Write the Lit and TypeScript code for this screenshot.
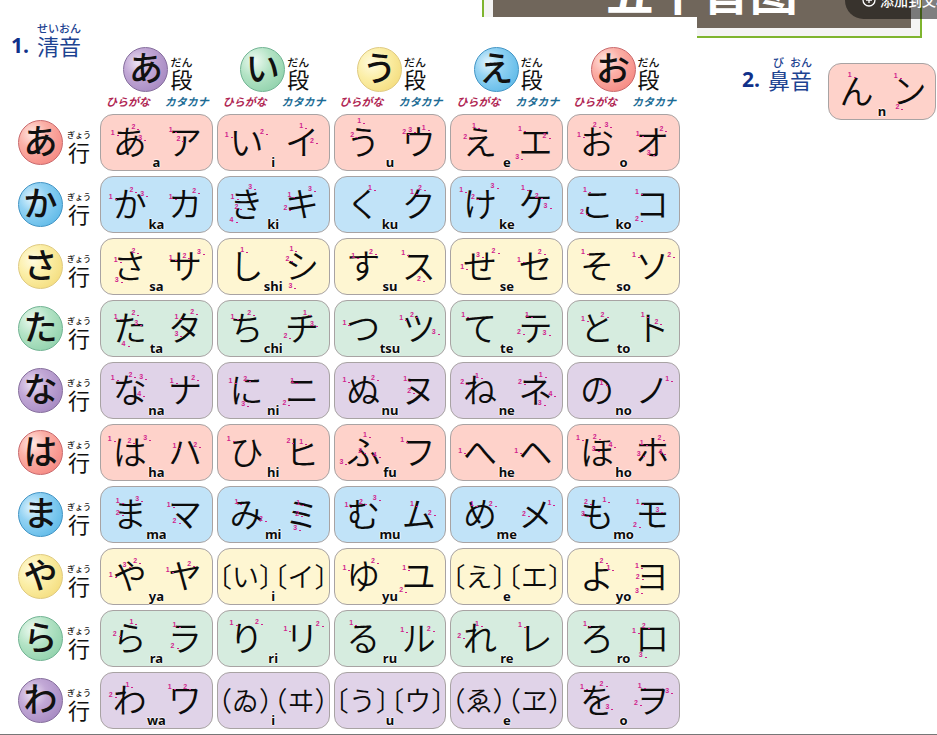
import { LitElement, html, css, nothing } from "lit";
import { customElement, property } from "lit/decorators.js";

type Tone = "red" | "blue" | "yellow" | "green" | "purple";

/** hiragana, katakana, romaji, stroke marks as "order,x,y" on a 113 x 57 card */
type Kana = [string, string, string, string];

interface Row {
  lead: string;
  tone: Tone;
  cells: Kana[];
}

const COLUMNS: { kana: string; tone: Tone }[] = [
  { kana: "あ", tone: "purple" },
  { kana: "い", tone: "green" },
  { kana: "う", tone: "yellow" },
  { kana: "え", tone: "blue" },
  { kana: "お", tone: "red" },
];

const ROWS: Row[] = [
  {
    lead: "あ", tone: "red", cells: [
      ["あ", "ア", "a", "1,12,18 2,33,12 3,40,23 1,71,15 2,79,24"],
      ["い", "イ", "i", "1,9,20 2,45,17 1,85,11 2,96,26"],
      ["う", "ウ", "u", "1,25,6 2,18,20 2,71,17 3,77,15 1,91,13"],
      ["え", "エ", "e", "1,23,11 2,14,22 1,70,14 2,95,21 3,67,42"],
      ["お", "オ", "o", "2,27,10 3,39,10 1,11,20 1,71,19 2,95,14 3,82,38"],
    ],
  },
  {
    lead: "か", tone: "blue", cells: [
      ["か", "カ", "ka", "1,10,20 2,31,13 3,42,17 1,71,20 2,95,14"],
      ["き", "キ", "ki", "1,15,20 3,33,10 2,19,30 4,14,43 1,73,18 3,94,12 2,69,31"],
      ["く", "ク", "ku", "1,36,11 1,79,15 2,87,11"],
      ["け", "ケ", "ke", "1,10,13 2,22,20 3,42,9 1,73,11 2,87,19 3,96,29"],
      ["こ", "コ", "ko", "1,17,13 2,14,35 1,70,15 2,70,42"],
    ],
  },
  {
    lead: "さ", tone: "yellow", cells: [
      ["さ", "サ", "sa", "1,15,21 2,33,12 3,16,41 1,71,19 2,85,17 3,100,13"],
      ["し", "シ", "shi", "1,25,11 1,75,10 2,71,20 3,74,47"],
      ["す", "ス", "su", "1,19,17 2,37,13 1,70,14 2,86,40"],
      ["せ", "セ", "se", "1,11,28 3,27,16 2,43,12 1,69,21 2,90,13"],
      ["そ", "ソ", "so", "1,15,13 1,67,16 2,103,16"],
    ],
  },
  {
    lead: "た", tone: "green", cells: [
      ["た", "タ", "ta", "1,15,16 2,33,12 3,36,22 4,23,43 1,77,16 2,93,11 3,77,33"],
      ["ち", "チ", "chi", "1,15,16 2,32,12 1,89,12 3,96,23 2,69,35"],
      ["つ", "ツ", "tsu", "1,10,22 1,68,17 2,79,14 3,101,31"],
      ["て", "テ", "te", "1,12,14 1,77,14 2,69,31 3,95,32"],
      ["と", "ト", "to", "1,15,18 2,35,14 1,76,14 2,90,21"],
    ],
  },
  {
    lead: "な", tone: "purple", cells: [
      ["な", "ナ", "na", "1,12,15 2,30,12 3,41,14 4,39,31 1,72,18 2,94,15"],
      ["に", "ニ", "ni", "1,13,18 2,28,16 3,26,41 1,76,18 2,68,40"],
      ["ぬ", "ヌ", "nu", "1,10,17 2,39,15 1,72,16 2,76,28"],
      ["ね", "ネ", "ne", "2,11,19 1,26,13 1,91,12 2,70,19 4,101,31 3,90,40"],
      ["の", "ノ", "no", "1,34,20 1,101,16"],
    ],
  },
  {
    lead: "は", tone: "red", cells: [
      ["は", "ハ", "ha", "1,9,14 2,29,16 3,45,13 1,75,21 2,96,20"],
      ["ひ", "ヒ", "hi", "1,11,14 2,72,16 1,85,17"],
      ["ふ", "フ", "fu", "1,31,10 2,26,26 3,7,37 4,41,30 1,69,15"],
      ["へ", "ヘ", "he", "1,9,26 1,66,26"],
      ["ほ", "ホ", "ho", "1,10,13 2,27,12 3,26,24 4,43,20 1,75,18 2,93,13 3,72,29 4,94,27"],
    ],
  },
  {
    lead: "ま", tone: "blue", cells: [
      ["ま", "マ", "ma", "1,17,14 3,37,12 2,17,26 1,69,18 2,75,34"],
      ["み", "ミ", "mi", "1,19,15 2,44,32 1,82,16 2,81,27 3,79,41"],
      ["む", "ム", "mu", "1,12,18 2,27,15 3,41,11 1,79,17 2,97,26"],
      ["め", "メ", "me", "1,21,17 2,40,17 1,100,16 2,74,27"],
      ["も", "モ", "mo", "2,18,15 1,37,13 3,15,27 1,71,15 3,91,23 2,68,38"],
    ],
  },
  {
    lead: "や", tone: "yellow", cells: [
      ["や", "ヤ", "ya", "1,10,26 3,24,16 2,35,12 1,68,21 2,90,15"],
      ["〔い〕", "〔イ〕", "i", ""],
      ["ゆ", "ユ", "yu", "1,10,19 2,39,12 1,71,19 2,68,41"],
      ["〔え〕", "〔エ〕", "e", ""],
      ["よ", "ヨ", "yo", "2,34,12 1,41,19 1,70,17 2,71,28 3,70,42"],
    ],
  },
  {
    lead: "ら", tone: "green", cells: [
      ["ら", "ラ", "ra", "1,31,11 2,14,23 1,75,14 2,73,35"],
      ["り", "リ", "ri", "1,14,12 2,40,11 1,69,18 2,102,13"],
      ["る", "ル", "ru", "1,17,12 1,69,19 2,96,18"],
      ["れ", "レ", "re", "2,8,25 1,26,13 1,70,14"],
      ["ろ", "ロ", "ro", "1,17,13 1,67,20 2,77,15 3,74,44"],
    ],
  },
  {
    lead: "わ", tone: "purple", cells: [
      ["わ", "ワ", "wa", "2,10,22 1,27,12 1,70,14 2,86,14"],
      ["（ゐ）", "（ヰ）", "i", ""],
      ["〔う〕", "〔ウ〕", "u", ""],
      ["（ゑ）", "（ヱ）", "e", ""],
      ["を", "ヲ", "o", "1,14,14 2,34,11 3,40,34 1,73,13 3,101,18 2,69,30"],
    ],
  },
];

@customElement("kana-card")
export class KanaCard extends LitElement {
  @property({ attribute: false }) kana: Kana = ["", "", "", ""];
  @property() tone: Tone = "red";

  static styles = css`
    :host {
      display: block;
    }
    .card {
      position: relative;
      box-sizing: border-box;
      display: grid;
      grid-template-columns: 1fr 1fr;
      height: 57px;
      border: 1px solid #a8a3a3;
      border-radius: 13px;
      color: #0c0c0c;
      font-family: "Noto Sans CJK JP", sans-serif;
    }
    .red { background: #fed2ca; }
    .blue { background: #c1e3f8; }
    .yellow { background: #fef6d2; }
    .green { background: #d6ecdf; }
    .purple { background: #e0d3e8; }
    .glyph {
      display: flex;
      align-items: center;
      justify-content: center;
      min-width: 0;
      height: 51px;
      padding-left: 2px;
      font-size: 34px;
      font-weight: 350;
      line-height: 51px;
      white-space: nowrap;
    }
    .archaic {
      height: 53px;
      padding-left: 0;
      font-size: 27px;
    }
    .romaji {
      position: absolute;
      left: 0;
      right: 0;
      bottom: 0;
      text-align: center;
      font: bold 13px/16px "Noto Sans", sans-serif;
      text-shadow: 1px 0 #fff9, -1px 0 #fff9, 0 1px #fff9, 0 -1px #fff9;
    }
    .mark {
      position: absolute;
      width: 6px;
      margin: -4px 0 0 -3px;
      text-align: center;
      color: #d0238c;
      font: bold 7px/8px "Liberation Sans", sans-serif;
    }
    .mark::after {
      content: "";
      position: absolute;
      left: 7px;
      top: 6px;
      width: 2px;
      height: 1px;
      background: #d0238c;
    }
  `;

  render() {
    const [hira, kata, romaji, marks] = this.kana;
    const glyph = hira.length > 1 ? "glyph archaic" : "glyph";
    return html`<div class="card ${this.tone}">
      <span class=${glyph}>${hira}</span>
      <span class=${glyph}>${kata}</span>
      <span class="romaji">${romaji}</span>
      ${marks
        ? marks.split(" ").map((m) => {
            const [order, x, y] = m.split(",");
            return html`<span class="mark" style="left:${(Number(x) / 113) * 100}%;top:${y}px">${order}</span>`;
          })
        : nothing}
    </div>`;
  }
}

@customElement("app-root")
export class AppRoot extends LitElement {
  static styles = css`
    :host {
      display: block;
      background: #fff;
      overflow: hidden;
      font-family: "Noto Sans CJK JP", sans-serif;
      color: #111;
    }
    .top {
      position: relative;
      height: 17px;
    }
    .banner {
      box-sizing: border-box;
      display: flex;
      height: 38px;
      margin: 0 15px 0 auto;
      width: 47%;
      padding: 0 9px 8px;
      border: 2px solid #7fb52f;
      border-top: 0;
      background: #f4f4f4;
    }
    .title {
      display: flex;
      flex: 1;
      align-items: flex-end;
      justify-content: center;
      margin: 0;
      padding-bottom: 15px;
      overflow: hidden;
      background: #70665b;
      color: #fff;
      font: bold 48px/48px "Noto Sans CJK SC", sans-serif;
      white-space: nowrap;
    }
    .add {
      position: absolute;
      top: -18px;
      right: -24px;
      display: flex;
      align-items: center;
      gap: 4px;
      height: 37px;
      width: 116px;
      padding: 0 0 1px 17px;
      border: 0;
      border-radius: 19px;
      background: rgba(0, 0, 0, 0.5);
      color: #fff;
      font: 500 14px/20px "Noto Sans CJK SC", sans-serif;
      white-space: nowrap;
    }
    .add svg {
      flex: none;
    }
    .sheet {
      position: relative;
      display: grid;
      grid-template-columns: 697fr 240fr;
      border-bottom: 1px solid #777;
    }
    .chart {
      background: #fff;
      padding-right: 13px;
    }
    .grid {
      width: 100%;
      table-layout: fixed;
      border-collapse: separate;
      border-spacing: 4px 5px;
    }
    .grid th,
    .grid td {
      padding: 0;
      font-weight: 400;
    }
    .corner {
      width: 92px;
      height: 87px;
      vertical-align: top;
    }
    .head {
      vertical-align: bottom;
    }
    .heading {
      display: flex;
      align-items: flex-end;
      gap: 8px;
      margin: 0;
      padding-left: 7px;
      color: #1d4391;
      font-size: 22px;
      line-height: 22px;
      font-weight: 400;
    }
    .num {
      color: #10318a;
      font: bold 21px/22px "Open Sans", sans-serif;
    }
    .read {
      display: flex;
      flex-direction: column;
      align-items: stretch;
    }
    .furi {
      display: flex;
      justify-content: space-between;
      font-size: 11px;
      line-height: 12px;
      font-weight: 500;
    }
    .late {
      padding-left: 5px;
    }
    .lead {
      display: flex;
      align-items: center;
    }
    .head .lead {
      justify-content: center;
      gap: 2px;
      padding-left: 3px;
    }
    .side .lead {
      gap: 4px;
      padding-left: 14px;
    }
    .lead .read {
      padding-top: 6px;
      font-size: 22px;
      line-height: 22px;
    }
    .lead .furi {
      line-height: 10px;
    }
    .side .furi {
      font-size: 8px;
    }
    .ball {
      box-sizing: border-box;
      flex: none;
      width: 45px;
      height: 45px;
      border-radius: 50%;
      font-size: 34px;
      line-height: 38px;
      font-weight: 500;
      text-align: center;
    }
    .red {
      border: 1px solid #c9686b;
      background: radial-gradient(circle at 32% 30%, #ffe9e4, #fbb0a7 35%, #f5837d 90%);
    }
    .blue {
      border: 1px solid #3f93c4;
      background: radial-gradient(circle at 32% 35%, #e6f6fd, #92d2f3 35%, #57b6e6 90%);
    }
    .yellow {
      border: 1px solid #dfca80;
      background: radial-gradient(circle at 32% 35%, #fffbe0, #fbeea6 40%, #f3da77 90%);
    }
    .green {
      border: 1px solid #70b392;
      background: radial-gradient(circle at 32% 30%, #eefaf1, #b3e3c5 40%, #8bcfa8 90%);
    }
    .purple {
      border: 1px solid #846c9c;
      background: radial-gradient(circle at 32% 35%, #ede2f3, #c2a8d6 35%, #a184be 90%);
    }
    .kinds {
      display: flex;
      justify-content: space-between;
      padding: 1px 4px 0 6px;
      font-size: 11px;
      line-height: 16px;
      font-weight: 700;
      font-style: italic;
    }
    .hira {
      color: #b02653;
    }
    .kata {
      color: #1d6c95;
    }
    .nasal {
      display: flex;
      align-items: flex-start;
      gap: 16px;
      padding: 39px 1px 0 38px;
    }
    .nasal kana-card {
      flex: 1;
      margin-top: 7px;
    }
  `;

  private lead(kana: string, tone: Tone, furi: string, word: string) {
    return html`<div class="lead">
      <span class="ball ${tone}">${kana}</span>
      <span class="read">
        <span class="furi">${[...furi].map((c) => html`<span>${c}</span>`)}</span>
        <span>${word}</span>
      </span>
    </div>`;
  }

  render() {
    return html`
      <header class="top">
        <div class="banner"><h1 class="title">五十音图</h1></div>
      </header>
      <main class="sheet">
        <section class="chart">
          <table class="grid">
            <thead>
              <tr>
                <th class="corner">
                  <h2 class="heading">
                    <span class="num">1.</span>
                    <span class="read"><span class="furi">せいおん</span><span>清音</span></span>
                  </h2>
                </th>
                ${COLUMNS.map(
                  (c) => html`<th class="head" scope="col">
                    ${this.lead(c.kana, c.tone, "だん", "段")}
                    <div class="kinds"><span class="hira">ひらがな</span><span class="kata">カタカナ</span></div>
                  </th>`
                )}
              </tr>
            </thead>
            <tbody>
              ${ROWS.map(
                (r) => html`<tr>
                  <th class="side" scope="row">${this.lead(r.lead, r.tone, "ぎょう", "行")}</th>
                  ${r.cells.map((k) => html`<td><kana-card .kana=${k} tone=${r.tone}></kana-card></td>`)}
                </tr>`
              )}
            </tbody>
          </table>
        </section>
        <section class="nasal">
          <h2 class="heading">
            <span class="num">2.</span>
            <span class="read">
              <span class="furi late"><span>び</span><span>おん</span></span>
              <span>鼻音</span>
            </span>
          </h2>
          <kana-card .kana=${["ん", "ン", "n", "1,22,11 1,71,12 2,73,43"] as Kana} tone="red"></kana-card>
        </section>
      </main>
      <button class="add" type="button">
        <svg width="14" height="14" viewBox="0 0 14 14" fill="none" stroke="#fff" stroke-width="1.3" aria-hidden="true">
          <circle cx="7" cy="7" r="6"></circle>
          <path d="M7 4v6M4 7h6"></path>
        </svg>
        <span>添加到文档</span>
      </button>
    `;
  }
}
